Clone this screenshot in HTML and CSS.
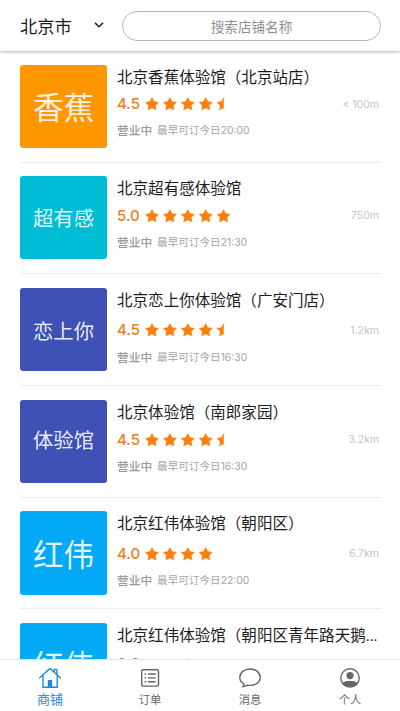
FILE: index.html
```html
<!DOCTYPE html>
<html lang="zh-CN">
<head>
<meta charset="utf-8">
<title>商铺</title>
<link rel="stylesheet" href="styles.css">
</head>
<body>
<svg class="defs" width="0" height="0">
  <defs>
    <path id="star" d="M7 0.5L9.2 4.6L13.6 5.3L10.5 8.6L11.1 13L7 11.1L2.9 13L3.5 8.6L0.4 5.3L4.8 4.6Z"/>
    <path id="half" d="M7 0.5V11.1L2.9 13L3.5 8.6L0.4 5.3L4.8 4.6Z"/>
    <g id="stars4">
      <use href="#star"/><use href="#star" x="17.9"/><use href="#star" x="35.8"/><use href="#star" x="53.7"/>
    </g>
  </defs>
</svg>
<div class="app">
  <header class="header">
    <div class="city">北京市
      <svg class="chevron" width="10" height="6" viewBox="0 0 10 6"><path d="M1 0.9L5 4.7L9 0.9"/></svg>
    </div>
    <div class="search">搜索店铺名称</div>
  </header>

  <main class="list">
    <article class="shop">
      <div class="tile orange big">香蕉</div>
      <div class="info">
        <h2 class="title">北京香蕉体验馆（北京站店）</h2>
        <div class="rating"><span class="score">4.5</span><svg class="stars" width="86" height="14"><use href="#stars4"/><use href="#half" x="71.6"/></svg><span class="distance">&lt; 100m</span></div>
        <div class="status"><b>营业中</b><span>最早可订今日<i>20:00</i></span></div>
      </div>
    </article>
    <article class="shop">
      <div class="tile cyan">超有感</div>
      <div class="info">
        <h2 class="title">北京超有感体验馆</h2>
        <div class="rating"><span class="score">5.0</span><svg class="stars" width="86" height="14"><use href="#stars4"/><use href="#star" x="71.6"/></svg><span class="distance">750m</span></div>
        <div class="status"><b>营业中</b><span>最早可订今日<i>21:30</i></span></div>
      </div>
    </article>
    <article class="shop loose">
      <div class="tile indigo">恋上你</div>
      <div class="info">
        <h2 class="title">北京恋上你体验馆（广安门店）</h2>
        <div class="rating"><span class="score">4.5</span><svg class="stars" width="86" height="14"><use href="#stars4"/><use href="#half" x="71.6"/></svg><span class="distance">1.2km</span></div>
        <div class="status"><b>营业中</b><span>最早可订今日<i>16:30</i></span></div>
      </div>
    </article>
    <article class="shop snug">
      <div class="tile indigo">体验馆</div>
      <div class="info">
        <h2 class="title">北京体验馆（南郎家园）</h2>
        <div class="rating"><span class="score">4.5</span><svg class="stars" width="86" height="14"><use href="#stars4"/><use href="#half" x="71.6"/></svg><span class="distance">3.2km</span></div>
        <div class="status"><b>营业中</b><span>最早可订今日<i>16:30</i></span></div>
      </div>
    </article>
    <article class="shop loose">
      <div class="tile blue big">红伟</div>
      <div class="info">
        <h2 class="title">北京红伟体验馆（朝阳区）</h2>
        <div class="rating"><span class="score">4.0</span><svg class="stars" width="86" height="14"><use href="#stars4"/></svg><span class="distance">6.7km</span></div>
        <div class="status"><b>营业中</b><span>最早可订今日<i>22:00</i></span></div>
      </div>
    </article>
    <article class="shop">
      <div class="tile blue big">红伟</div>
      <div class="info">
        <h2 class="title">北京红伟体验馆（朝阳区青年路天鹅<span class="dots">...</span></h2>
        <div class="rating"><span class="score">0.0</span><svg class="stars empty" width="86" height="14"><use href="#stars4"/><use href="#star" x="71.6"/></svg></div>
      </div>
    </article>
  </main>

  <nav class="tabs">
    <a class="tab active">
      <svg width="24" height="22" viewBox="0 0 24 22"><path d="M1.2 11.3L12 1.5L22.8 11.3M5 8.3V20.3H19.2V8.3M16.3 5V2.4H18.9V7.4"/><path class="solid" d="M9.8 13H14.2V20.3H9.8Z"/></svg>
      <span>商铺</span>
    </a>
    <a class="tab">
      <svg width="24" height="22" viewBox="0 0 24 22"><rect x="3.7" y="2.7" width="16.8" height="16.4" rx="1.5"/><path d="M6.5 7H8.2M6.5 10.9H8.2M6.5 14.8H8.2M10 7H17.7M10 10.9H17.7M10 14.8H17.7"/></svg>
      <span>订单</span>
    </a>
    <a class="tab">
      <svg width="24" height="22" viewBox="0 0 24 22"><path d="M5.8 16.6C3.2 15.2 1.8 13 1.8 10.4C1.8 5.6 6.2 2 12 2S22.2 5.6 22.2 10.4S17.8 18.4 12 18.4C11 18.4 10.1 18.3 9.2 18.1C7.9 18.9 6.5 19.4 4.9 19.6C5.7 18.7 6 17.7 5.8 16.6Z"/></svg>
      <span>消息</span>
    </a>
    <a class="tab">
      <svg width="24" height="22" viewBox="0 0 24 22"><circle cx="12" cy="10.9" r="9.2"/><circle class="solid" cx="12" cy="8.6" r="3.6"/><path class="solid" d="M4.6 16.2C7 13.4 9.5 14 12 14S17 13.4 19.4 16.2C17.4 18.8 14.8 20 12 20S6.6 18.8 4.6 16.2Z"/></svg>
      <span>个人</span>
    </a>
  </nav>
</div>
</body>
</html>
```

FILE: styles.css
```css
* { box-sizing: border-box; }
body {
  margin: 0;
  background: #fff;
  font-family: "Noto Sans CJK SC", sans-serif;
  color: #1c1c1c;
}
.defs { display: block; }
.app {
  height: 711px;
  display: flex;
  flex-direction: column;
  overflow: hidden;
}
.header {
  flex: none;
  height: 51px;
  display: flex;
  align-items: center;
  padding: 0 19px 0 20px;
  box-shadow: 0 1px 3px rgba(0, 0, 0, .3);
}
.city {
  width: 102px;
  display: flex;
  align-items: center;
  gap: 22px;
  font-size: 17.3px;
  line-height: 26px;
}
.chevron { position: relative; top: -1px; }
.chevron path { fill: none; stroke: #222; stroke-width: 1.5; }
.search {
  flex: 1;
  height: 30px;
  border: 1px solid #b8b8b8;
  border-radius: 15px;
  text-align: center;
  font-size: 13.6px;
  line-height: 28px;
  color: #8f8f8f;
}
.list {
  flex: 1;
  min-height: 0;
  overflow: hidden;
  padding: 0 19px 0 20px;
}
.shop {
  height: 111.7px;
  display: flex;
  gap: 10px;
  padding-top: 13.5px;
  border-bottom: 1px solid #ebebeb;
}
.tile {
  flex: none;
  width: 87px;
  height: 83.3px;
  border-radius: 3px;
  color: rgba(255, 255, 255, .9);
  font-size: 20.4px;
  line-height: 83px;
  text-align: center;
}
.big { font-size: 30.6px; }
.orange { background: #ff9800; }
.cyan { background: #00bcd4; }
.indigo { background: #3f51b5; }
.blue { background: #03a9f4; }
.info { flex: 1; min-width: 0; }
.title {
  margin: 0;
  font-size: 15.55px;
  font-weight: 400;
  line-height: 23px;
  white-space: nowrap;
}
.dots { font-family: Inter, sans-serif; font-size: 13.5px; }
.rating {
  height: 18px;
  margin-top: 7.5px;
  display: flex;
  align-items: center;
}
.loose .rating { margin-top: 10.5px; }
.snug .rating { margin-top: 8px; }
.loose .tile { line-height: 84.4px; }
.snug .tile { line-height: 79px; }
.score {
  width: 28px;
  font: 500 15px/18px Inter, sans-serif;
  color: #ed7d1a;
}
.stars { fill: #fb7f0d; stroke: #fb7f0d; stroke-width: .4; }
.empty { fill: #f3e2d0; stroke: #f3e2d0; }
.distance {
  margin-left: auto;
  margin-right: 2px;
  font: 10.5px/19px Inter, sans-serif;
  color: #c4c4c4;
}
.status {
  margin-top: 8.2px;
  display: flex;
  align-items: center;
  gap: 5px;
  height: 17px;
  font-size: 10.6px;
  color: #a5a5a5;
  white-space: nowrap;
}
.status b { font-size: 11.7px; font-weight: 500; color: #999; }
.status i { font: 10.4px Inter, sans-serif; }
.tabs {
  flex: none;
  height: 52px;
  display: flex;
  border-top: 1px solid #e6e6e6;
  background: #fff;
}
.tab {
  flex: 1;
  display: flex;
  flex-direction: column;
  align-items: center;
  padding-top: 7px;
  color: #666;
  font-size: 11.3px;
  line-height: 20px;
}
.tab svg { fill: none; stroke: currentColor; stroke-width: 1.4; }
.tab .solid { fill: currentColor; stroke: none; }
.active { color: #2189dc; font-size: 13px; }
```
